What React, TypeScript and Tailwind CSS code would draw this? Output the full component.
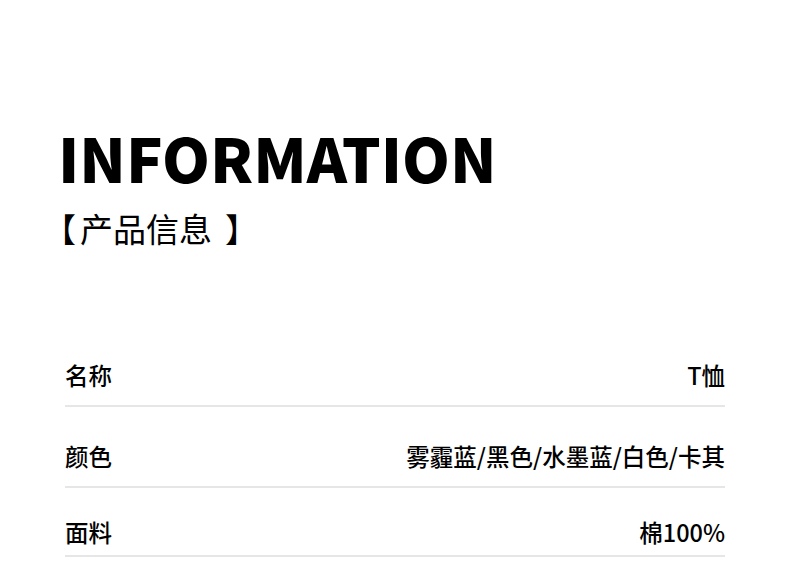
export default function App() {
  const rows = [
    { label: "名称", value: "T恤", pad: "pt-[16px] pb-[15px]" },
    { label: "颜色", value: "雾霾蓝/黑色/水墨蓝/白色/卡其", pad: "pt-[34px] pb-[15px]" },
    { label: "面料", value: "棉100%", pad: "pt-[29px] pb-[8px]" },
  ];

  return (
    <div
      className="w-[790px] h-[571px] bg-white text-black overflow-hidden"
      style={{ fontFamily: '"Noto Sans CJK SC", "Noto Sans", sans-serif' }}
    >
      <div className="pt-[126px] pl-[58px]">
        <h1 className="text-[61px] font-black leading-none tracking-[0px]">INFORMATION</h1>
        <p className="mt-[21px] text-[33px] font-normal leading-[40px] flex">
          <span className="-ml-[15px] mr-[4px]">【</span>
          <span>产品信息</span>
          <span className="ml-[13px]">】</span>
        </p>
      </div>
      <div className="mt-[96px] px-[65px]">
        {rows.map((r) => (
          <div
            key={r.label}
            className={`flex items-center justify-between border-b-2 border-[#e6e6e6] ${r.pad}`}
          >
            <span className="text-[23.5px] leading-[30px] font-medium">{r.label}</span>
            <span className="text-[23.5px] leading-[30px] font-medium">{r.value}</span>
          </div>
        ))}
      </div>
    </div>
  );
}
